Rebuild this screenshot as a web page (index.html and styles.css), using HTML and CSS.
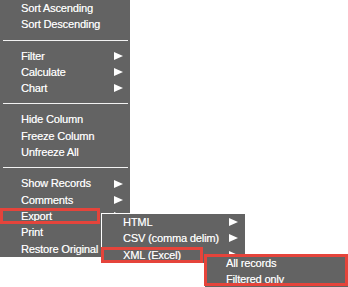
FILE: index.html
```html
<!DOCTYPE html>
<html>
<head>
<meta charset="utf-8">
<link rel="stylesheet" href="styles.css">
</head>
<body>
<div class="menu main">
  <div class="item">Sort Ascending</div>
  <div class="item">Sort Descending</div>
  <div class="sep"></div>
  <div class="item">Filter <svg class="arr" viewBox="0 0 9 8"><polygon points="0,0 9,4 0,8"/></svg></div>
  <div class="item">Calculate <svg class="arr" viewBox="0 0 9 8"><polygon points="0,0 9,4 0,8"/></svg></div>
  <div class="item">Chart <svg class="arr" viewBox="0 0 9 8"><polygon points="0,0 9,4 0,8"/></svg></div>
  <div class="sep"></div>
  <div class="item">Hide Column</div>
  <div class="item">Freeze Column</div>
  <div class="item">Unfreeze All</div>
  <div class="sep"></div>
  <div class="item">Show Records <svg class="arr" viewBox="0 0 9 8"><polygon points="0,0 9,4 0,8"/></svg></div>
  <div class="item">Comments <svg class="arr" viewBox="0 0 9 8"><polygon points="0,0 9,4 0,8"/></svg></div>
  <div class="item">Export <svg class="arr" viewBox="0 0 9 8"><polygon points="0,0 9,4 0,8"/></svg>
    <div class="hl hl-export"></div>
    <div class="menu sub export-sub">
      <div class="item">HTML <svg class="arr" viewBox="0 0 9 8"><polygon points="0,0 9,4 0,8"/></svg></div>
      <div class="item">CSV (comma delim) <svg class="arr" viewBox="0 0 9 8"><polygon points="0,0 9,4 0,8"/></svg></div>
      <div class="item">XML (Excel) <svg class="arr" viewBox="0 0 9 8"><polygon points="0,0 9,4 0,8"/></svg>
        <div class="hl hl-xml"></div>
        <div class="menu sub xml-sub">
          <div class="item">All records</div>
          <div class="item">Filtered only</div>
        </div>
        <div class="hl hl-xmlsub"></div>
      </div>
    </div>
  </div>
  <div class="item">Print</div>
  <div class="item">Restore Original</div>
</div>
</body>
</html>
```
FILE: styles.css
```css
html {
  overflow: hidden;
  height: 100%;
  background: #ffffff;
}
body {
  margin: 0;
  min-height: 100%;
  background: #ffffff;
  font-family: "Liberation Sans", Arial, sans-serif;
  font-size: 11px;
  color: #ffffff;
}
.menu {
  background: #636363;
}
.main {
  width: 130px;
}
.item {
  position: relative;
  height: 16.3px;
  line-height: 16.3px;
  padding: 0 7px 0 21px;
  display: flex;
  align-items: center;
  justify-content: space-between;
  white-space: nowrap;
  letter-spacing: -0.15px;
  text-shadow: 0.35px 0 0 rgba(255, 255, 255, 0.55);
}
.arr {
  width: 9px;
  height: 8px;
  flex: none;
  fill: #ffffff;
}
.sep {
  height: 1px;
  background: #f2f2f2;
  margin: 7px 2px 7px 3px;
}
.sub {
  position: absolute;
  width: 143px;
  border: 1px solid #ffffff;
}
.export-sub {
  left: 101px;
  top: 5px;
}
.xml-sub {
  left: 102px;
  top: 7.4px;
}
.hl {
  position: absolute;
  box-sizing: border-box;
  border: 3px solid #e5443b;
}
.hl-export {
  left: 0;
  top: 0;
  width: 100px;
  height: 16px;
}
.hl-xml {
  left: -1px;
  top: 0;
  width: 102px;
  height: 16px;
}
.hl-xmlsub {
  left: 102px;
  top: 7.4px;
  width: 144px;
  height: 32px;
}
```
